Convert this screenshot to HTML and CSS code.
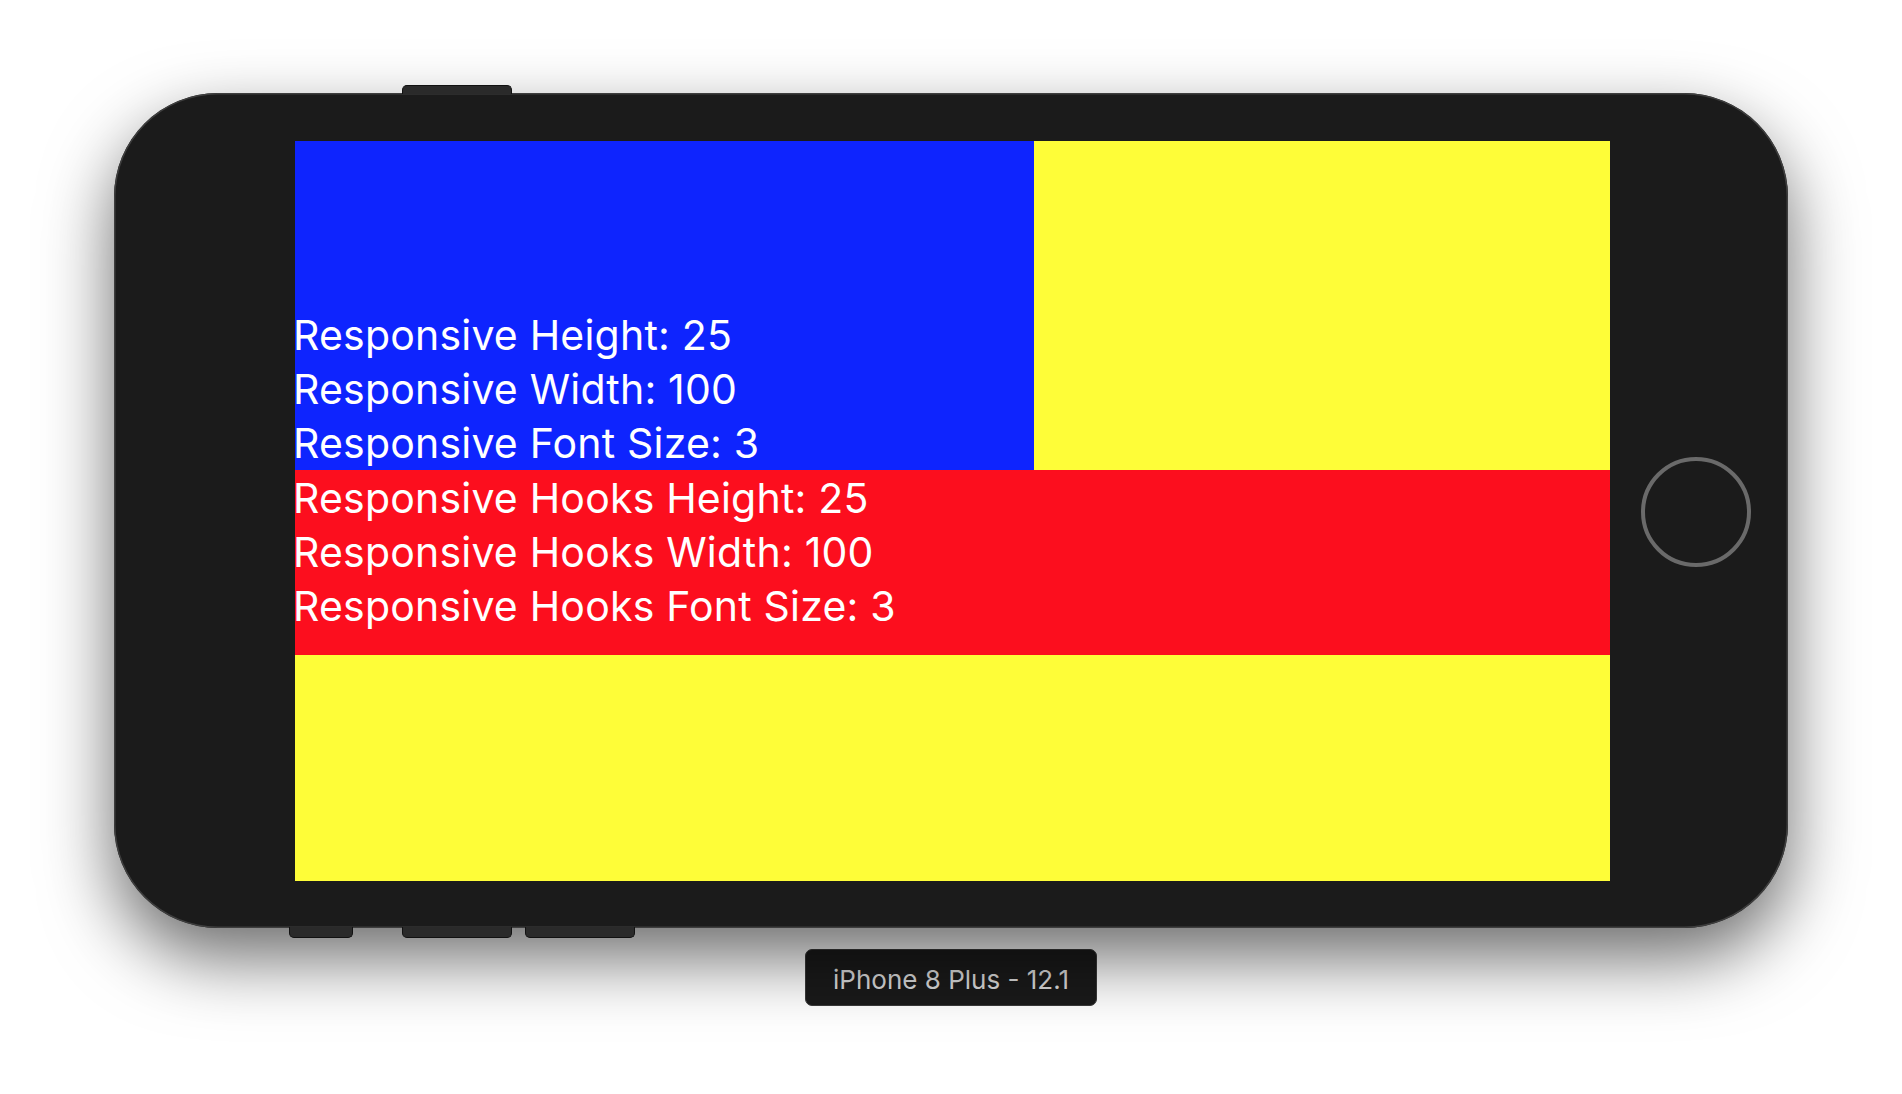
FILE: index.html
```html
<!DOCTYPE html>
<html>
<head>
<meta charset="utf-8">
<link rel="stylesheet" href="styles.css">
</head>
<body>
<div class="stage">
  <div class="phone">
    <span class="btn btn-top"></span>
    <span class="btn btn-b1"></span>
    <span class="btn btn-b2"></span>
    <span class="btn btn-b3"></span>
    <div class="screen">
      <div class="top-row">
        <div class="blue">
          <div class="line">Responsive Height: 25</div>
          <div class="line">Responsive Width: 100</div>
          <div class="line">Responsive Font Size: 3</div>
        </div>
      </div>
      <div class="red">
        <div class="line">Responsive Hooks Height: 25</div>
        <div class="line">Responsive Hooks Width: 100</div>
        <div class="line">Responsive Hooks Font Size: 3</div>
      </div>
    </div>
    <div class="home"></div>
  </div>
  <div class="label">iPhone 8 Plus - 12.1</div>
</div>
</body>
</html>
```

FILE: styles.css
```css
html, body {
  margin: 0;
  padding: 0;
  background: #ffffff;
  width: 1902px;
  height: 1094px;
  overflow: hidden;
}

.stage {
  display: flex;
  flex-direction: column;
  align-items: center;
  padding-top: 93px;
}

.phone {
  position: relative;
  width: 1674px;
  height: 835px;
  box-sizing: border-box;
  padding: 48px 178px 47px 181px;
  background: #1b1b1b;
  border-radius: 104px;
  box-shadow: inset 0 0 0 1.5px #3e3e3e, 0 30px 70px rgba(0, 0, 0, 0.58);
  display: flex;
  align-items: stretch;
}

.btn {
  position: absolute;
  background: #2a2a2a;
  border: 1px solid #111;
  box-sizing: border-box;
}
.btn-top { left: 288px; top: -8px; width: 110px; height: 9px; border-bottom: none; border-radius: 5px 5px 0 0; }
.btn-b1 { left: 175px; bottom: -10px; width: 64px; height: 11px; border-top: none; border-radius: 0 0 5px 5px; }
.btn-b2 { left: 288px; bottom: -10px; width: 110px; height: 11px; border-top: none; border-radius: 0 0 5px 5px; }
.btn-b3 { left: 411px; bottom: -10px; width: 110px; height: 11px; border-top: none; border-radius: 0 0 5px 5px; }

.screen {
  width: 1315px;
  height: 740px;
  background: #fefd38;
  display: flex;
  flex-direction: column;
  font-family: "Inter", "Liberation Sans", sans-serif;
  font-size: 41px;
  letter-spacing: 0.2px;
  line-height: 54px;
  color: #ffffff;
}

.top-row {
  height: 329px;
  display: flex;
}

.blue {
  width: 739px;
  background: #0e24fe;
  display: flex;
  flex-direction: column;
  justify-content: flex-end;
}

.red {
  height: 185px;
  background: #fc0e1e;
  display: flex;
  flex-direction: column;
  padding-top: 1px;
  box-sizing: border-box;
}

.line {
  white-space: nowrap;
  margin-left: -2px;
}

.home {
  position: absolute;
  left: 1527px;
  top: 364px;
  width: 110px;
  height: 110px;
  box-sizing: border-box;
  border: 4px solid #6a6a6a;
  border-radius: 50%;
}

.label {
  margin-top: 21px;
  width: 292px;
  height: 57px;
  box-sizing: border-box;
  padding-top: 3px;
  background: #1a1a1a;
  border: 1px solid #3a3a3a;
  border-radius: 7px;
  color: #dcdcdc;
  font-family: "Inter", "Liberation Sans", sans-serif;
  font-size: 26px;
  display: flex;
  align-items: center;
  justify-content: center;
}
```
